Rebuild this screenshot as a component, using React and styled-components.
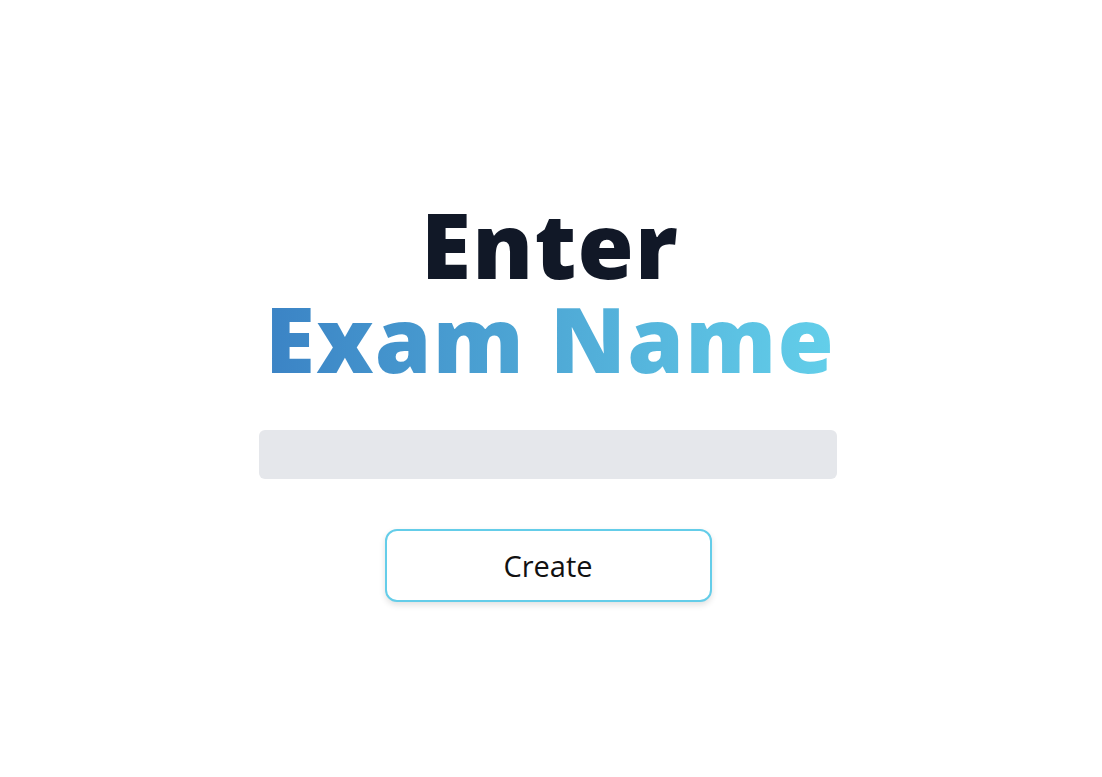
import React from "react";
import styled, { createGlobalStyle } from "styled-components";

const Global = createGlobalStyle`
  html, body { margin: 0; padding: 0; background: #ffffff; }
  body { font-family: "Open Sans", "Noto Sans", sans-serif; }
`;

const Page = styled.main`
  min-height: 777px;
  display: flex;
  flex-direction: column;
  align-items: center;
  padding-top: 197px;
  box-sizing: border-box;
`;

const Heading = styled.h1`
  margin: 0 2px 0 0;
  font-family: "Open Sans", "Noto Sans", sans-serif;
  font-weight: 800;
  font-size: 91px;
  line-height: 94px;
  letter-spacing: 1.3px;
  text-align: center;
  color: #111827;
`;

const Line = styled.span`
  display: block;
`;

const Gradient = styled.span`
  display: inline-block;
  background: linear-gradient(90deg, #3b83c5 0%, #4fa9d6 50%, #63cfea 100%);
  -webkit-background-clip: text;
  background-clip: text;
  color: transparent;
`;

const Input = styled.input`
  margin: 45px 6px 0 0;
  width: 578px;
  height: 49px;
  box-sizing: border-box;
  border: none;
  border-radius: 6px;
  background: #e5e7eb;
  padding: 0 16px;
  font-family: "Open Sans", sans-serif;
  font-size: 18px;
  outline: none;
`;

const Button = styled.button`
  margin: 50px 6px 0 0;
  width: 327px;
  height: 73px;
  box-sizing: border-box;
  border: 2px solid #64cde9;
  border-radius: 12px;
  background: #ffffff;
  box-shadow: 0 3px 6px rgba(0, 0, 0, 0.12);
  font-family: "Open Sans", sans-serif;
  font-size: 29px;
  color: #111111;
  cursor: pointer;
`;

export default function App() {
  return (
    <>
      <Global />
      <Page>
        <Heading>
          <Line>Enter</Line>
          <Line>
            <Gradient>Exam Name</Gradient>
          </Line>
        </Heading>
        <Input type="text" />
        <Button>Create</Button>
      </Page>
    </>
  );
}
